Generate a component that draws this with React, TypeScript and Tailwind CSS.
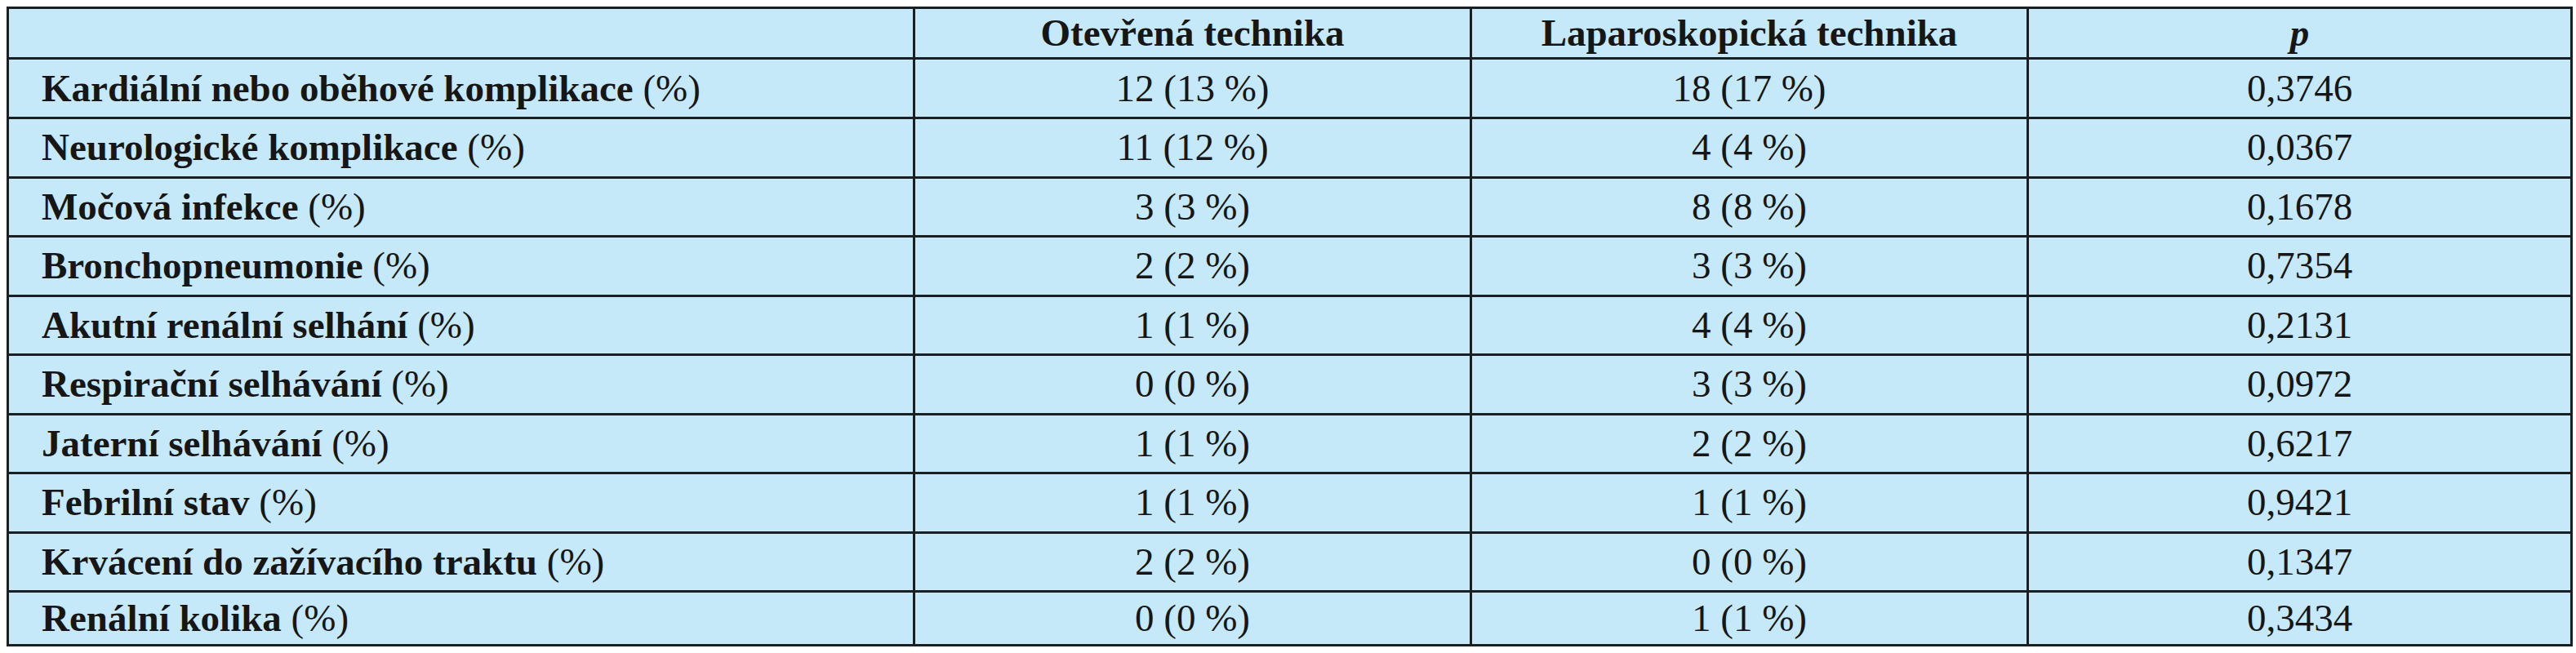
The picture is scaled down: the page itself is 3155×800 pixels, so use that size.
const rows: [string, string, string, string][] = [
  ['Kardiální nebo oběhové komplikace', '12 (13 %)', '18 (17 %)', '0,3746'],
  ['Neurologické komplikace', '11 (12 %)', '4 (4 %)', '0,0367'],
  ['Močová infekce', '3 (3 %)', '8 (8 %)', '0,1678'],
  ['Bronchopneumonie', '2 (2 %)', '3 (3 %)', '0,7354'],
  ['Akutní renální selhání', '1 (1 %)', '4 (4 %)', '0,2131'],
  ['Respirační selhávání', '0 (0 %)', '3 (3 %)', '0,0972'],
  ['Jaterní selhávání', '1 (1 %)', '2 (2 %)', '0,6217'],
  ['Febrilní stav', '1 (1 %)', '1 (1 %)', '0,9421'],
  ['Krvácení do zažívacího traktu', '2 (2 %)', '0 (0 %)', '0,1347'],
  ['Renální kolika', '0 (0 %)', '1 (1 %)', '0,3434'],
];

const cell = 'border-[3px] border-[#182024] p-0 align-middle';

export default function App() {
  return (
    <div className="w-[3155px] h-[800px] bg-white pt-[8px] pl-[8px] font-['Liberation_Serif',serif] text-[47px] leading-none text-[#161616]">
      <table className="table-fixed border-collapse bg-[#c6e9fa] w-[3143px]">
        <colgroup>
          <col className="w-[1110px]" />
          <col className="w-[682px]" />
          <col className="w-[682px]" />
          <col className="w-[666px]" />
        </colgroup>
        <thead>
          <tr className="h-[62px]">
            <th className={cell}></th>
            <th className={`${cell} font-bold text-center`}>Otevřená technika</th>
            <th className={`${cell} font-bold text-center`}>Laparoskopická technika</th>
            <th className={`${cell} font-bold italic text-center`}>p</th>
          </tr>
        </thead>
        <tbody>
          {rows.map((r, i) => (
            <tr
              key={r[0]}
              className={i === 0 ? 'h-[73px]' : i === rows.length - 1 ? 'h-[66px]' : 'h-[72.5px]'}
            >
              <td className={`${cell} pl-[40px] text-left`}>
                <span className="font-bold">{r[0]}</span> (%)
              </td>
              <td className={`${cell} text-center`}>{r[1]}</td>
              <td className={`${cell} text-center`}>{r[2]}</td>
              <td className={`${cell} text-center`}>{r[3]}</td>
            </tr>
          ))}
        </tbody>
      </table>
    </div>
  );
}
